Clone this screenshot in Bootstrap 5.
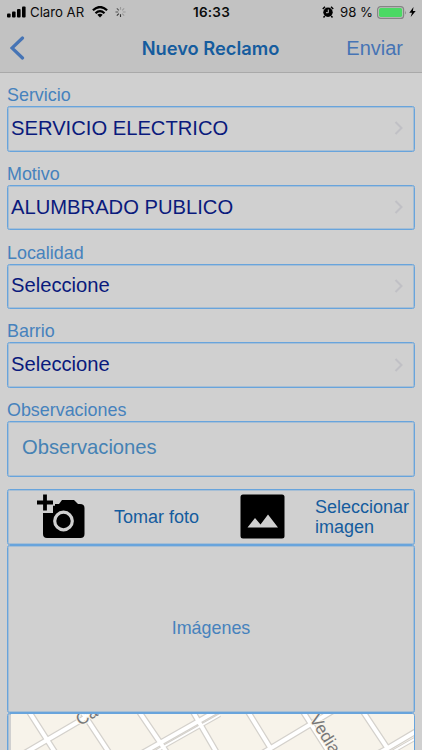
<!DOCTYPE html>
<html lang="es">
<head>
<meta charset="utf-8">
<meta name="viewport" content="width=device-width, initial-scale=1">
<title>Nuevo Reclamo</title>
<link href="https://cdn.jsdelivr.net/npm/bootstrap@5.3.0/dist/css/bootstrap.min.css" rel="stylesheet">
<style>
html,body{height:750px;overflow:hidden}
body{background:#d0d0d0;font-family:"Liberation Sans",Arial,sans-serif;color:#4682bd}
svg{display:block;flex:none}
.app-top{height:73px;background:#c2c2c2;border-bottom:1px solid #a9a9a9}
.status{height:24px;font:13.2px/24px Inter,sans-serif;color:#0b0b0b;padding:0 6px 0 7px}
.status>div{flex:1 1 0}
.clock{flex:none!important;font-weight:600;font-size:13.5px;letter-spacing:.2px}
.titlebar{height:48px;padding:0 19px 0 10px}
.titlebar>*{flex:1 1 0}
.titlebar h1{flex:none;margin:0;padding-left:8px;font:600 18.3px/47px Inter,sans-serif;color:#155c9e}
.send{font-size:20px;line-height:48px;color:#4674b5;text-decoration:none}
.form-area{padding:11px 7px 0}
.field{height:78.75px}
.field-label{font-size:17.9px;line-height:22px;height:22px;display:block}
.outlined{border:1px solid #68a4dc;border-radius:2.5px;box-shadow:inset 0 0 0 1px rgba(104,164,220,.4)}
.picker{height:45.5px;font-size:20.2px;line-height:43px;color:#0a1a7c;padding:0 11px 1px 3px}
.notes{height:56.5px;font-size:20.2px;padding:0 0 4px 14px;color:#4682b4}
.actions{height:56px;margin-top:11.5px;font-size:18px;line-height:20px;color:#155c9e}
.shot{width:77px;padding-left:28px}
.photo-text{margin-left:29px;width:126px}
.pick-text{margin-left:30px}
.gallery{height:168.5px;font-size:17.9px}
.map-box{height:60px;padding-left:2.5px;overflow:hidden}
</style>
<script src="https://cdn.jsdelivr.net/npm/bootstrap@5.3.0/dist/js/bootstrap.bundle.min.js"></script>
</head>
<body>
<header class="app-top">
  <div class="status d-flex align-items-center">
    <div class="d-flex align-items-center">
      <svg width="19" height="12" viewBox="0 0 19 12"><rect y="7.5" width="3.6" height="4" rx="1"/><rect x="5" y="5.5" width="3.6" height="6" rx="1"/><rect x="10" y="3" width="3.6" height="8.500" rx="1"/><rect x="15" y=".5" width="3.6" height="11" rx="1"/></svg>
      <span class="ms-1 text-nowrap">Claro AR</span>
      <svg class="ms-2" width="16" height="12" viewBox="0 0 16 12"><g fill="none" stroke="#000" stroke-width="2.200"><path d="M.9 4.300Q8-2.300 15.100 4.300M3.500 7.200Q8 3 12.500 7.200"/></g><path d="M5.300 8.800Q8 6.600 10.700 8.800L8 11.600Z"/></svg>
      <svg style="margin-left:7px" width="11" height="12" viewBox="-6 -6 12 12"><g stroke-width="1.200" stroke="#888"><path d="M0-2.500V-5.500M1.800-1.800 4-4M2.500 0H5.500M1.800 1.800 4 4" stroke="#999"/><path d="M0 2.500V5.500M-1.800 1.800-4 4" stroke="#333"/><path d="M-2.500 0H-5.500M-1.800-1.800-4-4" stroke="#555"/></g></svg>
    </div>
    <div class="clock">16:33</div>
    <div class="d-flex align-items-center justify-content-end">
      <svg width="12" height="12" viewBox="0 0 12 12"><circle cx="6" cy="6.300" r="4.700"/><path d="M.8 3 3 .8M9 .8l2.200 2.200M2.800 10 1.500 11.500M9.200 10l1.300 1.500" stroke="#000" stroke-width="1.500"/><path d="M6.300 3.500V6.700H4" fill="none" stroke="#c2c2c2"/></svg>
      <span class="text-nowrap" style="margin-left:6px">98 %</span>
      <svg style="margin-left:4px" width="30" height="13" viewBox="0 0 30 13"><rect x=".6" y=".6" width="26" height="11.800" rx="3" fill="none" stroke="#858585" stroke-width="1.200"/><rect x="2" y="2" width="23.200" height="9" rx="1.700" fill="#4bd964"/><path d="M28 4.500q1.500 2 0 4z" fill="#858585"/></svg>
      <svg style="margin-left:2px" width="7" height="12" viewBox="0 0 7 12"><path d="M4.500 1 .3 6.700H3L1.700 11 6.700 5H3.900Z"/></svg>
    </div>
  </div>
  <div class="titlebar d-flex align-items-center">
    <a href="#" aria-label="Volver"><svg width="15" height="24" viewBox="0 0 15 24"><path d="M12.500 2 2 12 12.500 22" fill="none" stroke="#4674b5" stroke-width="3.200" stroke-linecap="round"/></svg></a>
    <h1>Nuevo Reclamo</h1>
    <a class="send text-end" href="#">Enviar</a>
  </div>
</header>
<main class="form-area">
  <div class="field"><label class="field-label">Servicio</label><div class="picker outlined d-flex align-items-center justify-content-between"><span>SERVICIO ELECTRICO</span><svg width="9" height="14" viewBox="0 0 9 14"><path d="m1.500 1 6 6-6 6" fill="none" stroke="#c0c0c5" stroke-width="2"/></svg></div></div>
  <div class="field"><label class="field-label">Motivo</label><div class="picker outlined d-flex align-items-center justify-content-between"><span>ALUMBRADO PUBLICO</span><svg width="9" height="14" viewBox="0 0 9 14"><path d="m1.500 1 6 6-6 6" fill="none" stroke="#c0c0c5" stroke-width="2"/></svg></div></div>
  <div class="field"><label class="field-label">Localidad</label><div class="picker outlined d-flex align-items-center justify-content-between"><span>Seleccione</span><svg width="9" height="14" viewBox="0 0 9 14"><path d="m1.500 1 6 6-6 6" fill="none" stroke="#c0c0c5" stroke-width="2"/></svg></div></div>
  <div class="field"><label class="field-label">Barrio</label><div class="picker outlined d-flex align-items-center justify-content-between"><span>Seleccione</span><svg width="9" height="14" viewBox="0 0 9 14"><path d="m1.500 1 6 6-6 6" fill="none" stroke="#c0c0c5" stroke-width="2"/></svg></div></div>
  <label class="field-label" style="height:21.500px">Observaciones</label>
  <div class="notes outlined d-flex align-items-center">Observaciones</div>
  <div class="actions outlined d-flex align-items-center">
    <div class="shot"><svg width="50" height="46" viewBox="0 0 50 46"><path d="M7 19H17V10H23L26 6H38L42 10H44Q48.500 10 48.500 14V40Q48.500 44 44.500 44H11Q7 44 7 40Z"/><circle cx="27.500" cy="27" r="8.800" fill="none" stroke="#d0d0d0" stroke-width="3.200"/><path d="M9 0V18.500M1 8.500H19" stroke="#d0d0d0" stroke-width="6.500"/><path d="M9 .5V16.500M1 8.500H17" stroke="#000" stroke-width="3.800"/></svg></div>
    <span class="photo-text">Tomar foto</span>
    <svg width="45" height="45" viewBox="0 0 45 45"><rect x=".5" y=".5" width="44" height="44" rx="2.500"/><path d="M7.500 33.500 15 24 20.500 30.500 28 20.500 38 33.500Z" fill="#d0d0d0"/></svg>
    <span class="pick-text">Seleccionar<br>imagen</span>
  </div>
  <div class="gallery outlined d-flex align-items-center justify-content-center">Imágenes</div>
  <div class="map-box outlined">
    <svg width="403" height="60" viewBox="11 714 403 60">
      <defs><path id="streets" d="M28 710 60 760M81 710 114 760M138 710 172 760M192 710 221 760M13 760 47 740 100 709M130 760 160 743 220 709M247 710 271 749M302 710 334 760M362 710 388 749M251 760 271 748 336 709M366 760 388 748 420 729"/></defs>
      <path fill="#f7f3ea" d="M11 714h403v60H11z"/>
      <use href="#streets" fill="none" stroke="#d4d1cc" stroke-width="6.500"/>
      <path d="M152 754 165 746 220 715M392 752 420 736" stroke="#d4d1cc" stroke-width="4" fill="none"/>
      <use href="#streets" fill="none" stroke="#fff" stroke-width="4"/>
      <path d="M152 754 165 746 220 715M392 752 420 736" stroke="#fff" stroke-width="2" fill="none"/>
      <g fill="#777" stroke="#f7f3ea" stroke-width="2" paint-order="stroke" font-family="Liberation Sans,sans-serif" font-size="17"><text transform="translate(80 726) rotate(-30)">Ca</text><text transform="translate(309 719) rotate(58)">Vedia</text></g>
    </svg>
  </div>
</main>
</body>
</html>
